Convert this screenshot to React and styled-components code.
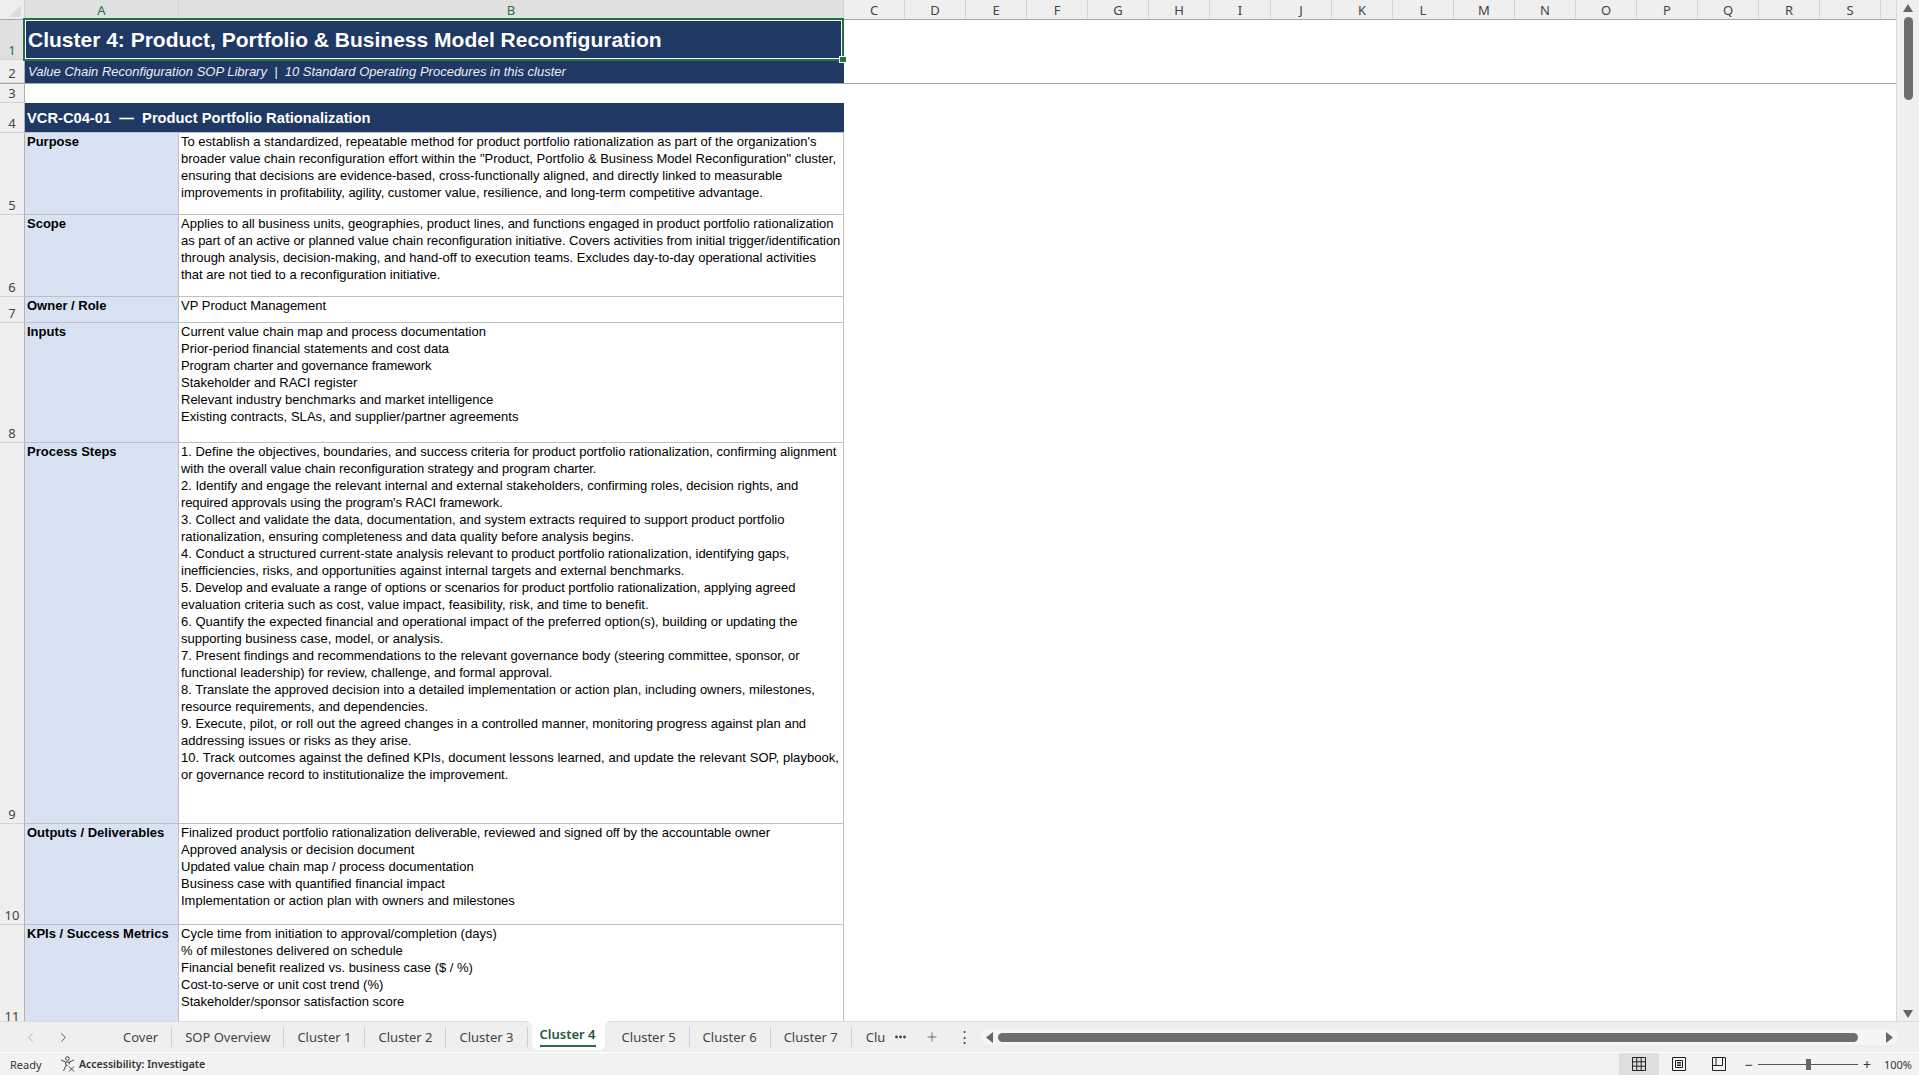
import styled, { createGlobalStyle } from "styled-components";
import { ChevronLeft, ChevronRight, Plus } from "lucide-react";

const COLORS = {
  navy: "#1f3864",
  label: "#d9e2f3",
  grid: "#bfbfbf",
  chrome: "#efefef",
  status: "#f3f3f3",
  green: "#217346",
  thumb: "#6e6e6e",
};

const GlobalStyle = createGlobalStyle`
  html, body { margin: 0; padding: 0; height: 100%; overflow: hidden; }
  body { background: #fff; font-family: "Liberation Sans", Arial, sans-serif; }
  * { box-sizing: border-box; }
`;

const COLS = "CDEFGHIJKLMNOPQRS".split("");

const PURPOSE = [
  "To establish a standardized, repeatable method for product portfolio rationalization as part of the organization's",
  'broader value chain reconfiguration effort within the "Product, Portfolio & Business Model Reconfiguration" cluster,',
  "ensuring that decisions are evidence-based, cross-functionally aligned, and directly linked to measurable",
  "improvements in profitability, agility, customer value, resilience, and long-term competitive advantage.",
];

const SCOPE = [
  "Applies to all business units, geographies, product lines, and functions engaged in product portfolio rationalization",
  "as part of an active or planned value chain reconfiguration initiative. Covers activities from initial trigger/identification",
  "through analysis, decision-making, and hand-off to execution teams. Excludes day-to-day operational activities",
  "that are not tied to a reconfiguration initiative.",
];

const INPUTS = [
  "Current value chain map and process documentation",
  "Prior-period financial statements and cost data",
  "Program charter and governance framework",
  "Stakeholder and RACI register",
  "Relevant industry benchmarks and market intelligence",
  "Existing contracts, SLAs, and supplier/partner agreements",
];

const STEPS = [
  "1. Define the objectives, boundaries, and success criteria for product portfolio rationalization, confirming alignment",
  "with the overall value chain reconfiguration strategy and program charter.",
  "2. Identify and engage the relevant internal and external stakeholders, confirming roles, decision rights, and",
  "required approvals using the program's RACI framework.",
  "3. Collect and validate the data, documentation, and system extracts required to support product portfolio",
  "rationalization, ensuring completeness and data quality before analysis begins.",
  "4. Conduct a structured current-state analysis relevant to product portfolio rationalization, identifying gaps,",
  "inefficiencies, risks, and opportunities against internal targets and external benchmarks.",
  "5. Develop and evaluate a range of options or scenarios for product portfolio rationalization, applying agreed",
  "evaluation criteria such as cost, value impact, feasibility, risk, and time to benefit.",
  "6. Quantify the expected financial and operational impact of the preferred option(s), building or updating the",
  "supporting business case, model, or analysis.",
  "7. Present findings and recommendations to the relevant governance body (steering committee, sponsor, or",
  "functional leadership) for review, challenge, and formal approval.",
  "8. Translate the approved decision into a detailed implementation or action plan, including owners, milestones,",
  "resource requirements, and dependencies.",
  "9. Execute, pilot, or roll out the agreed changes in a controlled manner, monitoring progress against plan and",
  "addressing issues or risks as they arise.",
  "10. Track outcomes against the defined KPIs, document lessons learned, and update the relevant SOP, playbook,",
  "or governance record to institutionalize the improvement.",
];

const OUTPUTS = [
  "Finalized product portfolio rationalization deliverable, reviewed and signed off by the accountable owner",
  "Approved analysis or decision document",
  "Updated value chain map / process documentation",
  "Business case with quantified financial impact",
  "Implementation or action plan with owners and milestones",
];

const KPIS = [
  "Cycle time from initiation to approval/completion (days)",
  "% of milestones delivered on schedule",
  "Financial benefit realized vs. business case ($ / %)",
  "Cost-to-serve or unit cost trend (%)",
  "Stakeholder/sponsor satisfaction score",
];

// lines where the spreadsheet's text widths drift from ours, keyed by first words
const LINE_FIT = {
  "as part of an active": -0.05,
  "with the overall": -0.06,
  "required approvals": -0.11,
  "5. Develop": -0.065,
  "evaluation criteria": 0.055,
  "10. Track": 0.045,
  "Finalized product": -0.06,
  "Program charter": -0.12,
  "Existing contracts": 0.04,
};

const fitFor = (line) => {
  const key = Object.keys(LINE_FIT).find((k) => line.startsWith(k));
  return key ? LINE_FIT[key] : 0;
};

const SOP_ROWS = [
  { num: 5, height: 82, label: "Purpose", lines: PURPOSE },
  { num: 6, height: 82, label: "Scope", lines: SCOPE },
  { num: 7, height: 26, label: "Owner / Role", lines: ["VP Product Management"] },
  { num: 8, height: 120, label: "Inputs", lines: INPUTS },
  { num: 9, height: 381, label: "Process Steps", lines: STEPS },
  { num: 10, height: 101, label: "Outputs / Deliverables", lines: OUTPUTS },
  { num: 11, height: 101, label: "KPIs / Success Metrics", lines: KPIS },
];

const TABS = ["Cover", "SOP Overview", "Cluster 1", "Cluster 2", "Cluster 3", "Cluster 4", "Cluster 5", "Cluster 6", "Cluster 7"];

function AccessibilityIcon() {
  return (
    <svg width="16" height="16" viewBox="0 0 16 16" fill="none" stroke="#444" strokeWidth="1">
      <circle cx="7.5" cy="2.5" r="1.8" />
      <path d="M1 4 L5.5 6 H9.5 L14 4" />
      <path d="M5.5 6 L6 9.5 L3.5 15" />
      <path d="M9.5 6 L9 8.5" />
      <path d="M6 9.5 H7.5" />
      <path d="M9 10.5 L14 15.5 M14 10.5 L9 15.5" />
    </svg>
  );
}

function NormalViewIcon() {
  return (
    <svg width="14" height="14" viewBox="0 0 14 14" fill="none" stroke="#222" strokeWidth="1">
      <path d="M.5.5h13v13H.5z M.5 4.8h13 M.5 9.2h13 M4.8.5v13 M9.2.5v13" />
    </svg>
  );
}

function PageLayoutIcon() {
  return (
    <svg width="14" height="14" viewBox="0 0 14 14" fill="none" stroke="#222" strokeWidth="1">
      <path d="M.5.5h13v13H.5z M3.5 3.5h7v7h-7z M5 5.5h4 M5 7h4 M5 8.5h4" />
    </svg>
  );
}

function PageBreakIcon() {
  return (
    <svg width="14" height="14" viewBox="0 0 14 14" fill="none" stroke="#222" strokeWidth="1">
      <path d="M.5.5h13v13H.5z M.5 8.5h10V.5 M4 8.5V.5" />
    </svg>
  );
}

function MoreIcon() {
  return (
    <svg width="11" height="4" viewBox="0 0 11 4" fill="#444">
      <circle cx="1.5" cy="2" r="1.4" />
      <circle cx="5.5" cy="2" r="1.4" />
      <circle cx="9.5" cy="2" r="1.4" />
    </svg>
  );
}

function Arrow({ dir }) {
  const points = {
    up: "0,8 5,0 10,8",
    down: "0,0 5,8 10,0",
    left: "7,0 0,5.5 7,11",
    right: "0,0 7,5.5 0,11",
  };
  const vertical = dir === "up" || dir === "down";
  return (
    <svg width={vertical ? 10 : 7} height={vertical ? 8 : 11} viewBox={vertical ? "0 0 10 8" : "0 0 7 11"}>
      <polygon points={points[dir]} fill="#666" />
    </svg>
  );
}

export default function App() {
  return (
    <>
      <GlobalStyle />
      <Window>
        <Workspace>
          <Sheet>
            <ColumnHeader>
              <Corner>
                <CornerMark />
              </Corner>
              <ColHead $width={154} $active>A</ColHead>
              <ColHead $width={665} $active>B</ColHead>
              {COLS.map((col) => (
                <ColHead key={col} $width={61}>{col}</ColHead>
              ))}
              <ColFiller />
            </ColumnHeader>

            <Row $height={40}>
              <RowHead $active>1</RowHead>
              <TitleCell>
                Cluster 4: Product, Portfolio &amp; Business Model Reconfiguration
                <Selection>
                  <FillHandle />
                </Selection>
              </TitleCell>
            </Row>
            <Row $height={24} $frozen>
              <RowHead>2</RowHead>
              <SubtitleCell>Value Chain Reconfiguration SOP Library&nbsp; |&nbsp; 10 Standard Operating Procedures in this cluster</SubtitleCell>
            </Row>
            <Row $height={19}>
              <RowHead>3</RowHead>
            </Row>
            <Row $height={30}>
              <RowHead>4</RowHead>
              <SectionCell>VCR-C04-01&nbsp; —&nbsp; Product Portfolio Rationalization</SectionCell>
            </Row>
            {SOP_ROWS.map((row) => (
              <Row key={row.num} $height={row.height}>
                <RowHead>{row.num}</RowHead>
                <LabelCell>{row.label}</LabelCell>
                <BodyCell>
                  {row.lines.map((line) => (
                    <Line key={line} $fit={fitFor(line)}>{line}</Line>
                  ))}
                </BodyCell>
              </Row>
            ))}
          </Sheet>
          <VScroll>
            <Arrow dir="up" />
            <VThumb />
            <VSpacer />
            <Arrow dir="down" />
          </VScroll>
        </Workspace>

        <TabBar>
          <TabNav>
            <ChevronLeft size={15} color="#a8a8a8" strokeWidth={1.4} />
            <ChevronRight size={15} color="#444" strokeWidth={1.4} />
          </TabNav>
          <TabList>
            {TABS.map((tab) => (
              <Tab key={tab} $active={tab === "Cluster 4"}>
                <TabLabel $active={tab === "Cluster 4"}>{tab}</TabLabel>
              </Tab>
            ))}
            <ClippedTab>Clu</ClippedTab>
          </TabList>
          <More>
            <MoreIcon />
          </More>
          <AddSheet>
            <Plus size={14} color="#444" strokeWidth={1.2} />
          </AddSheet>
          <Dots>⋮</Dots>
          <HScroll>
            <Arrow dir="left" />
            <HThumb />
            <Arrow dir="right" />
          </HScroll>
        </TabBar>

        <StatusBar>
          <Ready>Ready</Ready>
          <AccessibilityIcon />
          <Accessibility>Accessibility: Investigate</Accessibility>
          <StatusRight>
            <ViewGroup>
              <ViewButton $active><NormalViewIcon /></ViewButton>
              <ViewButton><PageLayoutIcon /></ViewButton>
              <ViewButton><PageBreakIcon /></ViewButton>
            </ViewGroup>
            <ZoomSign>−</ZoomSign>
            <ZoomTrack>
              <ZoomThumb />
            </ZoomTrack>
            <ZoomSign>+</ZoomSign>
            <ZoomValue>100%</ZoomValue>
          </StatusRight>
        </StatusBar>
      </Window>
    </>
  );
}

const Window = styled.div`
  display: flex;
  flex-direction: column;
  width: 1919px;
  height: 1075px;
  overflow: hidden;
  background: ${COLORS.chrome};
`;

const Workspace = styled.div`
  display: flex;
  height: 1021px;
  flex: none;
`;

const Sheet = styled.div`
  width: 1897px;
  height: 1021px;
  overflow: hidden;
  background: #fff;
  border-right: 1px solid #d9d9d9;
`;

const ColumnHeader = styled.div`
  display: flex;
  height: 20px;
  background: ${COLORS.chrome};
  border-bottom: 1px solid #a6a6a6;
`;

const Corner = styled.div`
  position: relative;
  width: 25px;
  flex: none;
  border-right: 1px solid #d4d4d4;
`;

const CornerMark = styled.div`
  position: absolute;
  right: 3px;
  bottom: 2px;
  width: 0;
  height: 0;
  border-left: 12px solid transparent;
  border-bottom: 12px solid #dcdcdc;
`;

const ColHead = styled.div`
  width: ${(p) => p.$width}px;
  flex: none;
  display: flex;
  align-items: center;
  justify-content: center;
  padding-top: 1px;
  font-family: "Noto Sans", sans-serif;
  font-size: 13px;
  color: ${(p) => (p.$active ? COLORS.green : "#444")};
  background: ${(p) => (p.$active ? "#e0e0e0" : "transparent")};
  border-right: 1px solid #d4d4d4;
`;

const ColFiller = styled.div`
  flex: 1;
`;

const Row = styled.div`
  display: flex;
  height: ${(p) => p.$height}px;
  border-bottom: ${(p) => (p.$frozen ? "1px solid #a6a6a6" : "none")};
`;

const RowHead = styled.div`
  width: 25px;
  flex: none;
  display: flex;
  align-items: flex-end;
  justify-content: center;
  padding-bottom: 1px;
  font-family: "Noto Sans", sans-serif;
  font-size: 13px;
  line-height: 16px;
  color: ${(p) => (p.$active ? COLORS.green : "#444")};
  background: ${(p) => (p.$active ? "#e0e0e0" : COLORS.chrome)};
  border-right: 1px solid #b0b0b0;
  border-bottom: 1px solid #d4d4d4;
`;

const TitleCell = styled.div`
  position: relative;
  width: 819px;
  flex: none;
  display: flex;
  align-items: center;
  padding: 0 0 0 3px;
  font-size: 21px;
  font-weight: 700;
  color: #fff;
  white-space: nowrap;
  background: ${COLORS.navy};
`;

const Selection = styled.div`
  position: absolute;
  left: -2px;
  top: -2px;
  right: 0;
  bottom: -1px;
  border: 2px solid ${COLORS.green};
  outline: 1px solid #fff;
  outline-offset: -3px;
`;

const FillHandle = styled.div`
  position: absolute;
  right: -4px;
  bottom: -3px;
  width: 6px;
  height: 5px;
  background: ${COLORS.green};
  outline: 1px solid #fff;
`;

const SubtitleCell = styled.div`
  width: 819px;
  flex: none;
  display: flex;
  align-items: center;
  padding: 0 0 1px 3px;
  font-size: 13px;
  font-style: italic;
  color: #eaeef6;
  white-space: nowrap;
  background: ${COLORS.navy};
`;

const SectionCell = styled.div`
  width: 819px;
  flex: none;
  display: flex;
  align-items: center;
  padding: 0 0 0 2px;
  font-size: 14.7px;
  font-weight: 700;
  color: #fff;
  white-space: nowrap;
  background: ${COLORS.navy};
  border-bottom: 1px solid ${COLORS.grid};
`;

const LabelCell = styled.div`
  width: 154px;
  flex: none;
  padding-left: 2px;
  font-size: 13px;
  line-height: 17px;
  font-weight: 700;
  color: #000;
  white-space: nowrap;
  background: ${COLORS.label};
  border-right: 1px solid ${COLORS.grid};
  border-bottom: 1px solid ${COLORS.grid};
`;

const BodyCell = styled.div`
  width: 665px;
  flex: none;
  padding-left: 2px;
  font-size: 13px;
  line-height: 17px;
  color: #000;
  border-right: 1px solid ${COLORS.grid};
  border-bottom: 1px solid ${COLORS.grid};
`;

const Line = styled.div`
  white-space: nowrap;
  letter-spacing: ${(p) => p.$fit}px;
`;

const VScroll = styled.div`
  width: 22px;
  flex: none;
  display: flex;
  flex-direction: column;
  align-items: center;
  padding: 4px 0 3px;
`;

const VThumb = styled.div`
  width: 9px;
  height: 83px;
  margin-top: 5px;
  border-radius: 5px;
  background: ${COLORS.thumb};
`;

const VSpacer = styled.div`
  flex: 1;
`;

const TabBar = styled.div`
  display: flex;
  align-items: center;
  height: 32px;
  flex: none;
  border-top: 1px solid #dcdcdc;
  border-bottom: 1px solid #fff;
  background: ${COLORS.chrome};
`;

const TabNav = styled.div`
  display: flex;
  gap: 18px;
  width: 110px;
  flex: none;
  padding-left: 23px;
`;

const TabList = styled.div`
  display: flex;
  align-items: center;
  height: 100%;
  font-family: "Noto Sans", sans-serif;
  font-size: 13px;
  color: #444;
`;

const Tab = styled.div`
  position: relative;
  display: flex;
  align-items: center;
  justify-content: center;
  height: ${(p) => (p.$active ? "29px" : "20px")};
  align-self: ${(p) => (p.$active ? "flex-start" : "center")};
  padding: 0 ${(p) => (p.$active ? 8 : 13)}px;
  background: ${(p) => (p.$active ? "#fff" : "transparent")};
  border-radius: ${(p) => (p.$active ? "0 0 6px 6px" : "0")};
  border-right: 1px solid ${(p) => (p.$active ? "#fff" : "#cfcfcf")};
  margin: ${(p) => (p.$active ? "-1px 4px 0" : "0")};

  &::before,
  &::after {
    content: "";
    display: ${(p) => (p.$active ? "block" : "none")};
    position: absolute;
    top: 0;
    width: 6px;
    height: 6px;
  }

  &::before {
    left: -6px;
    background: radial-gradient(circle at 0 100%, transparent 5.5px, #fff 6px);
  }

  &::after {
    right: -6px;
    background: radial-gradient(circle at 100% 100%, transparent 5.5px, #fff 6px);
  }
`;

const TabLabel = styled.span`
  font-weight: ${(p) => (p.$active ? 600 : 400)};
  color: ${(p) => (p.$active ? "#1e5a3c" : "#444")};
  padding-bottom: ${(p) => (p.$active ? 2 : 0)}px;
  border-bottom: ${(p) => (p.$active ? `2px solid ${COLORS.green}` : "none")};
`;

const ClippedTab = styled.div`
  width: 36px;
  padding-left: 14px;
  overflow: hidden;
`;

const More = styled.div`
  display: flex;
  width: 37px;
  flex: none;
  padding-left: 7px;
`;

const AddSheet = styled.div`
  width: 32px;
  flex: none;
  display: flex;
`;

const Dots = styled.div`
  width: 24px;
  flex: none;
  font-size: 15px;
  color: #444;
`;

const HScroll = styled.div`
  display: flex;
  align-items: center;
  gap: 5px;
  width: 917px;
  height: 16px;
  flex: none;
  padding: 0 5px;
  border-radius: 8px;
  background: #f5f5f5;
`;

const HThumb = styled.div`
  flex: 1;
  height: 9px;
  margin-right: 23px;
  border-radius: 5px;
  background: ${COLORS.thumb};
`;

const StatusBar = styled.div`
  display: flex;
  align-items: center;
  height: 22px;
  flex: none;
  padding-left: 10px;
  font-family: "Noto Sans", sans-serif;
  font-size: 11px;
  color: #333;
  background: ${COLORS.status};
`;

const Ready = styled.span`
  width: 50px;
  flex: none;
`;

const Accessibility = styled.span`
  margin-left: 3px;
  font-size: 10.5px;
  font-weight: 600;
`;

const StatusRight = styled.div`
  display: flex;
  align-items: center;
  height: 100%;
  margin-left: auto;
  padding-right: 7px;
`;

const ViewGroup = styled.div`
  display: flex;
  height: 100%;
  margin-right: 1px;
`;

const ViewButton = styled.div`
  display: flex;
  align-items: center;
  justify-content: center;
  width: 40px;
  height: 100%;
  background: ${(p) => (p.$active ? "#dedede" : "transparent")};
`;

const ZoomSign = styled.span`
  width: 12px;
  margin: 0 3px;
  font-size: 14px;
  text-align: center;
`;

const ZoomTrack = styled.div`
  position: relative;
  width: 100px;
  height: 1px;
  background: #555;
`;

const ZoomThumb = styled.div`
  position: absolute;
  left: 48px;
  top: -5px;
  width: 5px;
  height: 11px;
  background: #666;
`;

const ZoomValue = styled.span`
  margin-left: 8px;
  font-size: 11px;
`;
